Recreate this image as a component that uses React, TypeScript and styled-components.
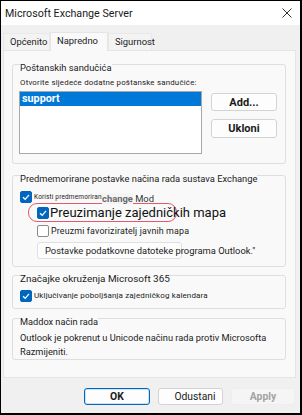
import React from 'react';
import styled, { createGlobalStyle } from 'styled-components';

const GlobalStyle = createGlobalStyle`
  html, body {
    margin: 0;
    padding: 0;
    background: #fff;
  }
  body {
    font-family: Roboto, "Noto Sans", sans-serif;
    color: #1b1b1b;
  }
`;

const Check = ({ checked }: { checked: boolean }) => (
  <Box $checked={checked}>
    {checked && (
      <svg width="10" height="10" viewBox="0 0 10 10">
        <polyline points="2,5.2 4.2,7.3 8,2.8" fill="none" stroke="#fff" strokeWidth="1.3" />
      </svg>
    )}
  </Box>
);

export default function App() {
  return (
    <>
      <GlobalStyle />
      <Window>
        <TitleBar>
          <Title>Microsoft Exchange Server</Title>
          <svg width="10" height="10" viewBox="0 0 10 10">
            <path d="M0.5 0.5 L9.5 9.5 M9.5 0.5 L0.5 9.5" stroke="#333" strokeWidth="1" />
          </svg>
        </TitleBar>

        <Body>
          <Tabs>
            <Tab $w={47}>Općenito</Tab>
            <Tab $w={58} $active>Napredno</Tab>
            <Tab $w={44}>Sigurnost</Tab>
          </Tabs>

          <Panel>
            <Group $mt={13} $h={100}>
              <GroupTitle $size={9.4}>Poštanskih sandučića</GroupTitle>
              <Hint>Otvorite sljedeće dodatne poštanske sandučiće:</Hint>
              <MailboxRow>
                <ListBox>
                  <ListItem $selected>support</ListItem>
                </ListBox>
                <SideButtons>
                  <Button $w={66} $h={18} $bold $size={11}>Add...</Button>
                  <Button $w={66} $h={19} $bold $size={11}>Ukloni</Button>
                </SideButtons>
              </MailboxRow>
            </Group>

            <Group $mt={11} $h={92}>
              <GroupTitle $size={9.35}>Predmemorirane postavke načina rada sustava Exchange</GroupTitle>
              <CheckRow $mt={6}>
                <Check checked />
                <SmallLabel $size={6.5}>Koristi predmemorirani</SmallLabel>
                <Annotation>
                  <b>change</b> Mod
                </Annotation>
              </CheckRow>
              <Highlight>
                <Check checked />
                <BigLabel>Preuzimanje zajedničkih mapa</BigLabel>
              </Highlight>
              <CheckRow $mt={3} $indent={17}>
                <Check checked={false} />
                <SmallLabel $size={8.9}>Preuzmi favoriziratelj javnih mapa</SmallLabel>
              </CheckRow>
              <WideButton>Postavke podatkovne datoteke programa Outlook."</WideButton>
            </Group>

            <Group $mt={8} $h={34}>
              <GroupTitle $size={9.95}>Značajke okruženja Microsoft 365</GroupTitle>
              <CheckRow $mt={5}>
                <Check checked />
                <SmallLabel $size={8}>Uključivanje poboljšanja zajedničkog kalendara</SmallLabel>
              </CheckRow>
            </Group>

            <Group $mt={9} $h={42}>
              <GroupTitle $size={9.2}>Maddox način rada</GroupTitle>
              <Info>
                Outlook je pokrenut u Unicode načinu rada protiv Microsofta
                <br />
                Razmijeniti.
              </Info>
            </Group>
          </Panel>

          <Footer>
            <Button $w={66} $h={17} $bold $primary $size={10.4}>OK</Button>
            <Button $w={65} $h={17} $size={10.3} $padLeft={9}>Odustani</Button>
            <Button $w={64} $h={17} $bold $disabled $size={10.4}>Apply</Button>
          </Footer>
        </Body>
      </Window>
    </>
  );
}

// ----- Styles ------ //

const Window = styled.div`
  width: 302px;
  height: 415px;
  box-sizing: border-box;
  border: 1px solid #000;
  border-right-width: 2px;
  border-bottom-width: 2px;
  display: flex;
  flex-direction: column;
  background: #f0f0f0;
  overflow: hidden;
`;

const TitleBar = styled.div`
  height: 24px;
  flex-shrink: 0;
  background: #fff;
  display: flex;
  align-items: center;
  justify-content: space-between;
  padding: 0 8px 0 4px;
`;

const Title = styled.span`
  font-size: 10.7px;
  color: #1a1a1a;
`;

const Body = styled.div`
  flex: 1;
  min-width: 0;
  padding: 7px 4px 0 2px;
  display: flex;
  flex-direction: column;
`;

const Tabs = styled.div`
  display: flex;
  align-items: flex-end;
  height: 18px;
`;

const Tab = styled.div<{ $w: number; $active?: boolean }>`
  box-sizing: border-box;
  width: ${p => p.$w}px;
  height: ${p => (p.$active ? 19 : 17)}px;
  margin-bottom: ${p => (p.$active ? -1 : 0)}px;
  padding-left: 6px;
  font-size: 9.4px;
  line-height: 16px;
  white-space: nowrap;
  background: ${p => (p.$active ? '#f9f9f9' : '#f3f3f3')};
  border: 1px solid ${p => (p.$active ? '#e5e5e5' : '#e9e9e9')};
  border-bottom: none;
  position: relative;
  z-index: ${p => (p.$active ? 1 : 0)};
`;

const Panel = styled.div`
  box-sizing: border-box;
  height: 328px;
  min-width: 0;
  background: #f9f9f9;
  border: 1px solid #e5e5e5;
  padding: 0 9px 0 8px;
  display: flex;
  flex-direction: column;
`;

const Group = styled.div<{ $mt: number; $h: number }>`
  box-sizing: border-box;
  margin-top: ${p => p.$mt}px;
  height: ${p => p.$h}px;
  min-width: 0;
  border: 1px solid #dedede;
  border-radius: 3px;
  padding: 0 6px 0 7px;
  display: flex;
  flex-direction: column;
  align-items: flex-start;
`;

const GroupTitle = styled.div<{ $size: number }>`
  margin-top: -3px;
  font-size: ${p => p.$size}px;
  line-height: 12px;
  background: #f9f9f9;
  white-space: nowrap;
`;

const Hint = styled.div`
  margin-top: 4px;
  font-size: 7.9px;
  line-height: 10px;
  letter-spacing: 0.2px;
  white-space: nowrap;
`;

const MailboxRow = styled.div`
  margin-top: 3px;
  margin-left: -1px;
  display: flex;
  gap: 9px;
`;

const ListBox = styled.div`
  box-sizing: border-box;
  width: 183px;
  height: 63px;
  background: #fff;
  border: 1px solid #a8a8a8;
`;

const ListItem = styled.div<{ $selected?: boolean }>`
  height: 14px;
  line-height: 14px;
  padding-left: 2px;
  font-size: 10.8px;
  font-weight: 700;
  color: ${p => (p.$selected ? '#fff' : '#1b1b1b')};
  background: ${p => (p.$selected ? '#0078d7' : 'transparent')};
`;

const SideButtons = styled.div`
  padding-top: 2px;
  display: flex;
  flex-direction: column;
  gap: 8px;
`;

const Button = styled.div<{
  $w: number;
  $h: number;
  $bold?: boolean;
  $primary?: boolean;
  $disabled?: boolean;
  $size: number;
  $padLeft?: number;
}>`
  box-sizing: border-box;
  width: ${p => p.$w}px;
  height: ${p => p.$h}px;
  padding-left: ${p => p.$padLeft || 0}px;
  display: flex;
  align-items: center;
  justify-content: center;
  font-size: ${p => p.$size}px;
  font-weight: ${p => (p.$bold ? 700 : 400)};
  color: ${p => (p.$disabled ? '#a3a3a3' : '#1b1b1b')};
  background: ${p => (p.$disabled ? '#f5f5f5' : '#fdfdfd')};
  border: 1px solid
    ${p => (p.$primary ? '#0067c0' : p.$disabled ? '#eeeeee' : '#d3d3d3')};
  border-radius: 3px;
  box-shadow: ${p => (p.$primary ? 'inset 0 0 0 1px #cfe2f3' : 'none')};
`;

const CheckRow = styled.div<{ $mt: number; $indent?: number }>`
  position: relative;
  margin-top: ${p => p.$mt}px;
  margin-left: ${p => p.$indent || 0}px;
  height: 12px;
  display: flex;
  align-items: center;
  gap: 2px;
`;

const Box = styled.span<{ $checked: boolean }>`
  box-sizing: border-box;
  width: 12px;
  height: 12px;
  flex-shrink: 0;
  border-radius: 2px;
  display: flex;
  align-items: center;
  justify-content: center;
  background: ${p => (p.$checked ? '#0067c0' : '#fff')};
  border: 1px solid ${p => (p.$checked ? '#0067c0' : '#8a8a8a')};
`;

const SmallLabel = styled.span<{ $size: number }>`
  font-size: ${p => p.$size}px;
  line-height: 10px;
  letter-spacing: 0.15px;
  white-space: nowrap;
`;

const Annotation = styled.span`
  position: absolute;
  left: 82px;
  top: 2px;
  font-size: 9.4px;
  line-height: 11px;
  color: #333;
  white-space: nowrap;
  b {
    font-weight: 700;
    color: #6a6a6a;
    background: #f4f4f4;
  }
`;

const Highlight = styled.div`
  box-sizing: border-box;
  margin-left: 8px;
  width: 149px;
  height: 19px;
  border: 1px solid #e3596d;
  border-radius: 9px;
  padding-left: 8px;
  display: flex;
  align-items: center;
  gap: 1px;
`;

const BigLabel = styled.span`
  font-size: 13px;
  line-height: 16px;
  color: #111;
  white-space: nowrap;
`;

const WideButton = styled.div`
  box-sizing: border-box;
  margin-top: 5px;
  margin-left: 17px;
  width: 145px;
  height: 17px;
  padding-left: 7px;
  display: flex;
  align-items: center;
  font-size: 9.4px;
  white-space: nowrap;
  background: #fdfdfd;
  border: 1px solid #e0e0e0;
  border-radius: 3px;
`;

const Info = styled.div`
  margin-top: 3px;
  font-size: 9.25px;
  line-height: 14px;
  white-space: nowrap;
`;

const Footer = styled.div`
  margin-top: 10px;
  padding-right: 1px;
  display: flex;
  justify-content: flex-end;
  gap: 8px;
`;
